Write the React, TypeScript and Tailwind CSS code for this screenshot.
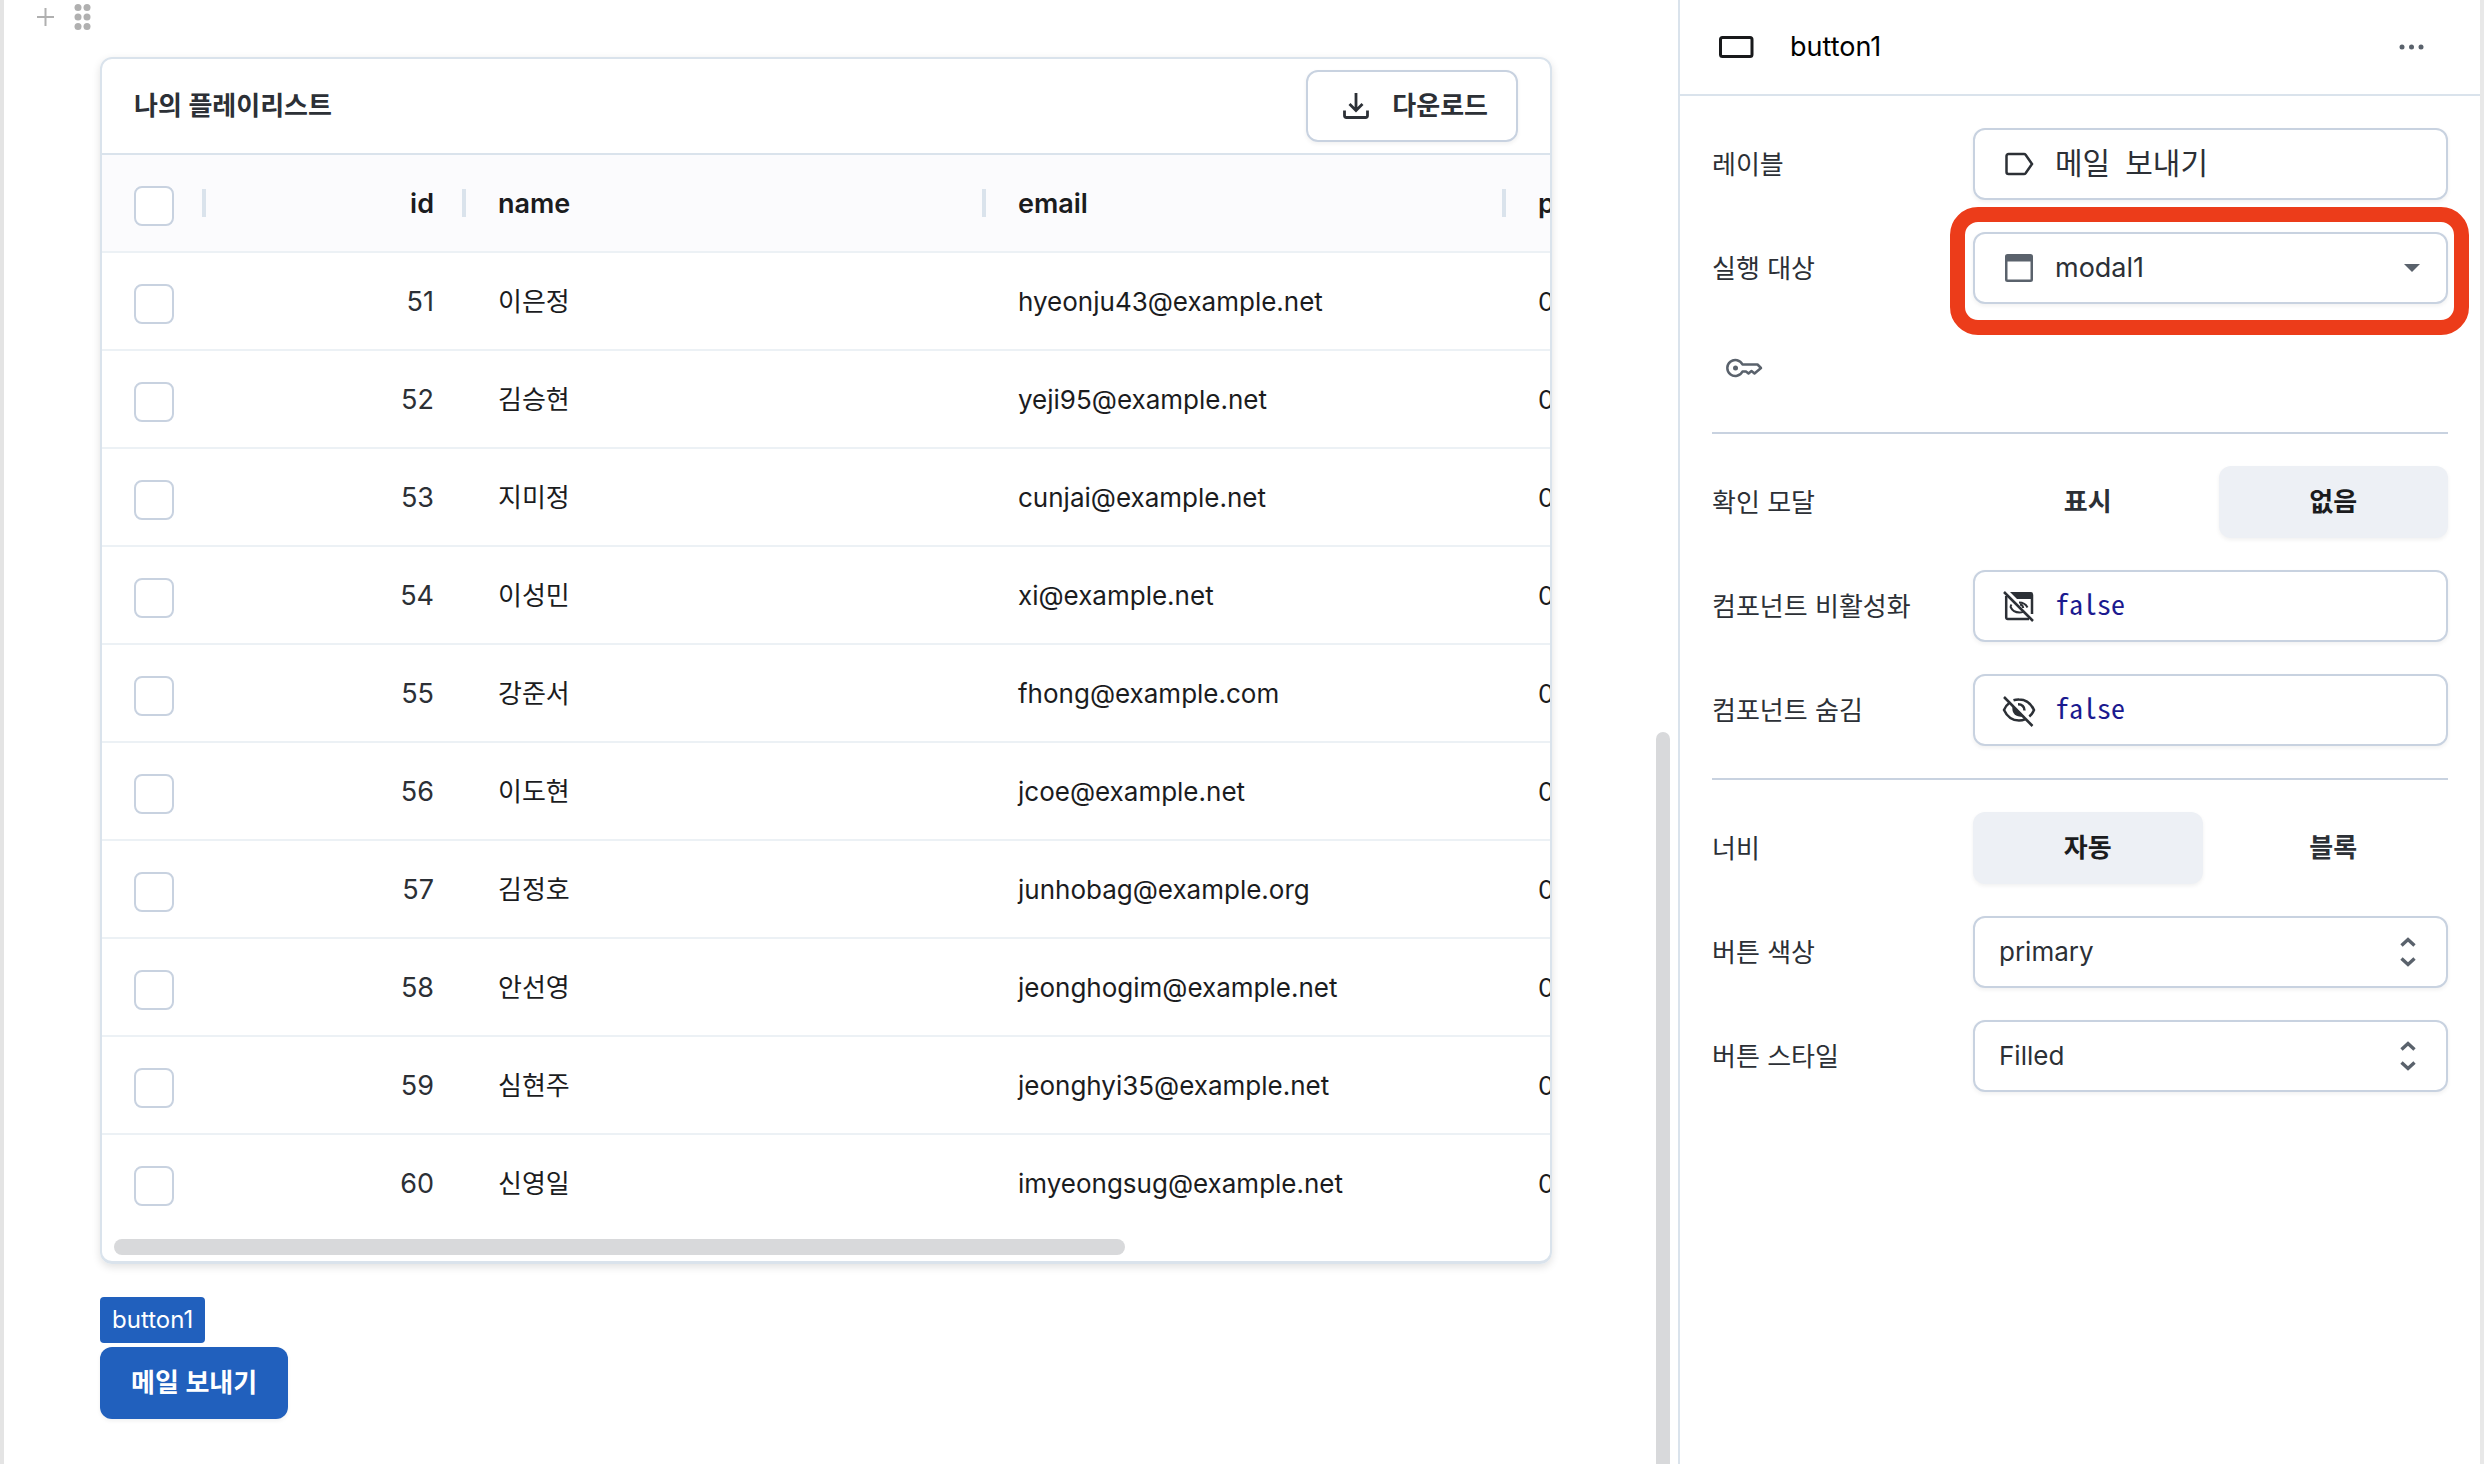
import type { ReactNode } from "react";

const rows = [
  { id: 51, name: "이은정", email: "hyeonju43@example.net" },
  { id: 52, name: "김승현", email: "yeji95@example.net" },
  { id: 53, name: "지미정", email: "cunjai@example.net" },
  { id: 54, name: "이성민", email: "xi@example.net" },
  { id: 55, name: "강준서", email: "fhong@example.com" },
  { id: 56, name: "이도현", email: "jcoe@example.net" },
  { id: 57, name: "김정호", email: "junhobag@example.org" },
  { id: 58, name: "안선영", email: "jeonghogim@example.net" },
  { id: 59, name: "심현주", email: "jeonghyi35@example.net" },
  { id: 60, name: "신영일", email: "imyeongsug@example.net" },
];

const control =
  "h-[72px] w-full appearance-none rounded-xl border-2 border-[#c8d2e0] bg-white shadow-[0_2px_4px_rgba(0,0,0,0.06)] outline-none";
const code = "pb-1.5 pl-20 font-['Noto_Sans_Mono_CJK_KR','Noto_Sans_CJK_KR',monospace]";

function DownloadIcon() {
  return (
    <svg className="size-8" viewBox="0 0 32 32" fill="none" stroke="currentColor" strokeWidth="2.8" aria-hidden="true">
      <path d="M16 3v17M9.5 14l6.5 6.5 6.5-6.5M4.5 20.5v5a2 2 0 0 0 2 2h19a2 2 0 0 0 2-2v-5" />
    </svg>
  );
}

function TagIcon() {
  return (
    <svg className="size-8" viewBox="0 0 32 32" fill="none" stroke="currentColor" strokeWidth="2.5" aria-hidden="true">
      <path d="M3.5 8a2 2 0 0 1 2-2H21a2 2 0 0 1 1.6.8L29 16l-6.4 9.2a2 2 0 0 1-1.6.8H5.5a2 2 0 0 1-2-2z" />
    </svg>
  );
}

function WindowIcon() {
  return (
    <svg className="size-8" viewBox="0 0 32 32" aria-hidden="true">
      <path
        fill="currentColor"
        fillRule="evenodd"
        d="M4.500 2h23A2.500 2.500 0 0 1 30 4.500v23a2.500 2.500 0 0 1-2.500 2.500h-23A2.500 2.500 0 0 1 2 27.500v-23A2.500 2.500 0 0 1 4.500 2zM4.500 9.500v18h23v-18z"
      />
    </svg>
  );
}

function WindowOffIcon() {
  return (
    <svg className="size-8" viewBox="0 0 32 32" fill="none" stroke="currentColor" strokeWidth="2.5" aria-hidden="true">
      <path d="M3.2 6v21.5A1.5 1.5 0 0 0 4.700 29H26M29 24V4.500" />
      <path fill="currentColor" stroke="none" d="M7 2h21a2 2 0 0 1 2 2v5H14z" />
      <path strokeWidth="2" d="M16 12.500c4 0 7 2 8.500 5M8.500 14.500c-.6.800-.9 1.600-.9 2.500 1.500 3.500 5 5.500 9 5.500 1.500 0 2.500-.2 3.500-.6M17 14.500c2 .3 3 1.500 3.200 3.500" />
      <path d="M1 2l29 29" />
    </svg>
  );
}

function EyeOffIcon() {
  return (
    <svg className="size-9 shrink-0" viewBox="0 0 36 36" fill="none" stroke="currentColor" strokeWidth="2.5" aria-hidden="true">
      <path d="M12.500 8.300A16 16 0 0 1 18 7.500c6.500 0 12 4 15 10.500-1 2.600-2.600 4.800-4.700 6.500" />
      <path d="M8 11.300C5.700 13 4 15.300 3 18c3 6.500 8.500 10.500 15 10.500 2.200 0 4.200-.4 6-1.200" />
      <path d="M17 12.300c4 0 6.600 2.400 6.500 6.200" />
      <path fill="currentColor" stroke="none" d="M12 13.500c-2 4.500.5 11 7.500 11.200 1.400 0 2.400-.4 3.200-.8z" />
      <path d="M3 5l28.500 29" />
    </svg>
  );
}

function KeyIcon() {
  return (
    <svg className="h-6 w-10" viewBox="0 0 40 24" fill="none" stroke="currentColor" strokeWidth="2.5" strokeLinejoin="round" aria-hidden="true">
      <path d="M18.500 8.500a8 8 0 1 0 0 7H22l2.500 2 3-2.500 3 2.500 6.500-5.500-3.500-3.500z" />
      <circle cx="11.5" cy="12" r="2.5" fill="currentColor" stroke="none" />
    </svg>
  );
}

function Resizer() {
  return <span className="absolute right-0 top-[34px] h-7 w-1 bg-[#dae3ec]" />;
}

function Check({ label }: { label: string }) {
  return (
    <input
      type="checkbox"
      aria-label={label}
      className="mt-1 block size-10 appearance-none rounded-lg border-2 border-[#c8d2e0] bg-white"
    />
  );
}

function PlaylistTable() {
  return (
    <section className="overflow-hidden rounded-xl border-2 border-b-3 border-[#dae3ec] shadow-[0_3px_8px_rgba(0,0,0,0.12)]">
      <header className="flex h-24 items-center justify-between border-b-2 border-[#dae3ec] px-8">
        <h2 className="text-[26px] font-semibold text-[#2c3036]">나의 플레이리스트</h2>
        <button className="flex h-[72px] items-center gap-5 rounded-xl border-2 border-[#c8d2e0] pl-8 pr-7 text-[26px] font-semibold text-[#2c3036] shadow-[0_2px_4px_rgba(0,0,0,0.06)]">
          <DownloadIcon />
          다운로드
        </button>
      </header>
      <div className="overflow-hidden">
        <table className="w-[1760px] table-fixed border-separate border-spacing-0 text-[26px] text-[#1b1c1e]">
          <colgroup>
            <col className="w-[104px]" />
            <col className="w-[260px]" />
            <col className="w-[520px]" />
            <col className="w-[520px]" />
            <col />
          </colgroup>
          <thead className="bg-[#fbfbfd] text-left text-[27px]">
            <tr className="h-[98px] [&>th]:relative [&>th]:border-b-2 [&>th]:border-[#ecf1f5] [&>th]:px-8 [&>th]:pt-0.5 [&>th]:font-semibold">
              <th>
                <Check label="모두 선택" />
                <Resizer />
              </th>
              <th className="text-right">
                id
                <Resizer />
              </th>
              <th>
                name
                <Resizer />
              </th>
              <th>
                email
                <Resizer />
              </th>
              <th>phone</th>
            </tr>
          </thead>
          <tbody>
            {rows.map((row) => (
              <tr
                key={row.id}
                className="h-[98px] [&>td]:border-b-2 [&>td]:border-[#ecf1f5] [&>td]:px-8 [&>td]:pt-0.5 last:[&>td]:border-transparent"
              >
                <td>
                  <Check label={row.name} />
                </td>
                <td className="text-right text-[27px] text-[#2c3036]">{row.id}</td>
                <td>{row.name}</td>
                <td>{row.email}</td>
                <td>010</td>
              </tr>
            ))}
          </tbody>
        </table>
      </div>
      <div className="px-3 py-[6px]">
        <div className="h-4 w-[71%] rounded-full bg-[#d8d9db]" />
      </div>
    </section>
  );
}

function Canvas() {
  return (
    <main className="relative min-w-0 flex-1 overflow-hidden border-l-4 border-[#e4e4e4] pl-24 pr-[126px]">
      <div className="-ml-[67px] flex h-[57px] gap-4 text-[#b0b0b0]">
        <button aria-label="추가" className="h-[34px]">
          <svg className="size-6" viewBox="0 0 24 24" stroke="currentColor" strokeWidth="2" aria-hidden="true">
            <path d="M12.5 3v18M4 12h17" />
          </svg>
        </button>
        <button aria-label="이동" className="h-[34px]">
          <svg className="h-7 w-5" viewBox="0 0 20 28" fill="currentColor" aria-hidden="true">
            <circle cx="5" cy="4.5" r="3.5" />
            <circle cx="14" cy="4.5" r="3.5" />
            <circle cx="5" cy="14" r="3.5" />
            <circle cx="14" cy="14" r="3.5" />
            <circle cx="5" cy="23.5" r="3.5" />
            <circle cx="14" cy="23.5" r="3.5" />
          </svg>
        </button>
      </div>
      <PlaylistTable />
      <div className="mt-[33px] flex flex-col items-start gap-1 text-white">
        <span className="flex h-[46px] items-center rounded bg-[#2160bd] px-3 text-2xl">button1</span>
        <button className="h-[72px] rounded-xl bg-[#2160bd] px-[31px] text-[26px] font-semibold shadow-[0_2px_4px_rgba(0,0,0,0.06)]">
          메일 보내기
        </button>
      </div>
      {/* scrollbar thumb */}
      <div className="absolute bottom-0 right-2 top-1/2 w-[14px] rounded-t-full bg-[#d8d9db]" />
    </main>
  );
}

function Row({ label, htmlFor, children }: { label: string; htmlFor?: string; children: ReactNode }) {
  return (
    <div className="grid grid-cols-[261px_1fr] items-center text-[26px] text-[#2c3036]">
      <label htmlFor={htmlFor} className="pt-px">
        {label}
      </label>
      <div className="relative">{children}</div>
    </div>
  );
}

function Segmented({ options, selected }: { options: string[]; selected: string }) {
  return (
    <div className="grid grid-cols-2 gap-4">
      {options.map((option) => (
        <button
          key={option}
          aria-pressed={option === selected}
          className="h-[72px] rounded-xl font-semibold aria-pressed:bg-[#edf0f5] aria-pressed:text-[#1b1c1e] aria-pressed:shadow-[0_2px_4px_rgba(0,0,0,0.06)]"
        >
          {option}
        </button>
      ))}
    </div>
  );
}

function FieldIcon({ children }: { children: ReactNode }) {
  return (
    <span className="pointer-events-none absolute inset-y-0 left-7 flex w-9 items-center justify-center">{children}</span>
  );
}

function Chevrons() {
  return (
    <svg
      className="pointer-events-none absolute right-[30px] top-5 h-8 w-5 text-[#5a626c]"
      viewBox="0 0 20 32"
      fill="none"
      stroke="currentColor"
      strokeWidth="3.4"
      aria-hidden="true"
    >
      <path d="M3.5 9.500 10 3.500l6.500 6M3.500 22.500l6.500 6 6.500-6" />
    </svg>
  );
}

function Inspector() {
  return (
    <aside className="w-[806px] shrink-0 border-l-2 border-r-4 border-l-[#dae3ec] border-r-[#e8e8e8]">
      <header className="flex h-24 items-center border-b-2 border-[#dae3ec] pl-[39px] pr-[54px]">
        <svg className="h-6 w-9" viewBox="0 0 36 24" fill="none" stroke="#18191b" strokeWidth="3" aria-hidden="true">
          <rect x="1.5" y="2.5" width="31.5" height="19" rx="2" />
        </svg>
        <h2 className="ml-[35px] flex-1 text-[27px] text-black">button1</h2>
        <button aria-label="더 보기" className="text-[#5a626c]">
          <svg className="h-2 w-7" viewBox="0 0 28 8" fill="currentColor" aria-hidden="true">
            <circle cx="4" cy="4" r="2.5" />
            <circle cx="13.5" cy="4" r="2.5" />
            <circle cx="23" cy="4" r="2.5" />
          </svg>
        </button>
      </header>
      <div className="flex flex-col gap-8 p-8">
        <Row label="레이블" htmlFor="label">
          <input id="label" defaultValue="메일 보내기" className={`${control} ${code} text-[30px]`} />
          <FieldIcon>
            <TagIcon />
          </FieldIcon>
        </Row>
        <Row label="실행 대상" htmlFor="target">
          <select id="target" className={`${control} pl-20 text-[27px]`}>
            <option>modal1</option>
          </select>
          <span className="text-[#5a626c]">
            <FieldIcon>
              <WindowIcon />
            </FieldIcon>
            <svg className="pointer-events-none absolute right-7 top-8 h-2 w-4" viewBox="0 0 16 8" fill="currentColor" aria-hidden="true">
              <path d="M0 0h16L8 8z" />
            </svg>
          </span>
          {/* highlight around the target field */}
          <div className="pointer-events-none absolute -bottom-[31px] -left-[23px] -right-[21px] -top-[25px] rounded-[28px] border-[15px] border-[#ec3c1a]" />
        </Row>
        <button aria-label="비밀 값" className="flex h-16 items-center pl-3 text-[#5a626c]">
          <KeyIcon />
        </button>
        <hr className="border-t-2 border-[#c8d2e0]" />
        <Row label="확인 모달">
          <Segmented options={["표시", "없음"]} selected="없음" />
        </Row>
        <Row label="컴포넌트 비활성화" htmlFor="disabled">
          <input id="disabled" defaultValue="false" className={`${control} ${code} text-[28px] text-[#1b1a8f]`} />
          <FieldIcon>
            <WindowOffIcon />
          </FieldIcon>
        </Row>
        <Row label="컴포넌트 숨김" htmlFor="hidden">
          <input id="hidden" defaultValue="false" className={`${control} ${code} text-[28px] text-[#1b1a8f]`} />
          <FieldIcon>
            <EyeOffIcon />
          </FieldIcon>
        </Row>
        <hr className="border-t-2 border-[#c8d2e0]" />
        <Row label="너비">
          <Segmented options={["자동", "블록"]} selected="자동" />
        </Row>
        <Row label="버튼 색상" htmlFor="color">
          <select id="color" className={`${control} pl-6`}>
            <option>primary</option>
          </select>
          <Chevrons />
        </Row>
        <Row label="버튼 스타일" htmlFor="style">
          <select id="style" className={`${control} pl-6`}>
            <option>Filled</option>
          </select>
          <Chevrons />
        </Row>
      </div>
    </aside>
  );
}

export default function App() {
  return (
    <div className="flex min-h-screen bg-white font-[Inter,'Noto_Sans_CJK_KR',sans-serif] leading-9">
      <Canvas />
      <Inspector />
    </div>
  );
}
